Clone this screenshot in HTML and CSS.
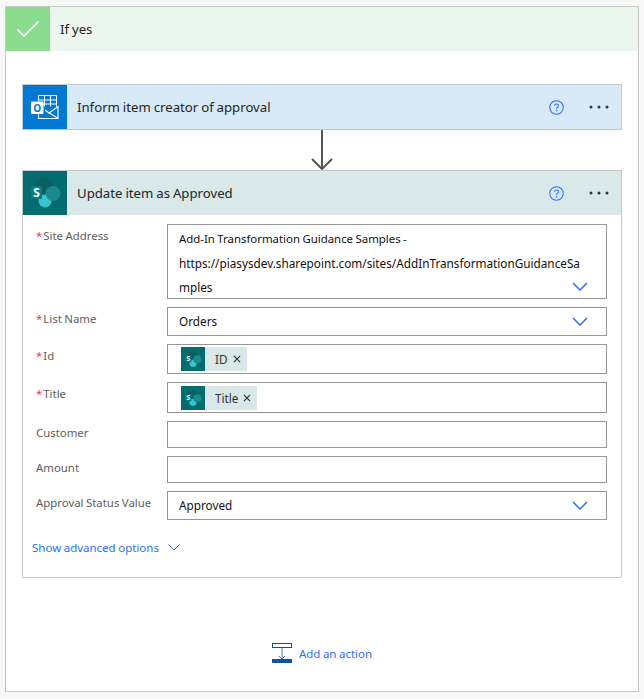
FILE: index.html
```html
<!DOCTYPE html>
<html lang="en">
<head>
  <meta charset="UTF-8" />
  <title>If yes</title>
  <link rel="stylesheet" href="styles.css">
</head>
<body>

  <svg class="defs" width="0" height="0">
    <symbol id="sharepoint" viewBox="0 0 44 44">
      <circle cx="21" cy="17" r="10" fill="#0b5f63" />
      <circle cx="22" cy="30" r="6.500" fill="#37c6d0" />
      <circle cx="30" cy="22.500" r="7.500" fill="#1a8a8f" />
      <rect x="8" y="15" width="11" height="13" rx="1" fill="#0a7c80" />
    </symbol>
    <symbol id="chevron" viewBox="0 0 16 9">
      <path d="M1 1l7 7 7-7" fill="none" stroke="#2b6fff" stroke-width="1.5" />
    </symbol>
    <symbol id="help" viewBox="0 0 16 16">
      <circle cx="8" cy="8" r="7.2" fill="none" stroke="#2b6fff" stroke-width="1.1" />
      <path d="M5.9 6.2c0-1.3 1-2 2.1-2s2.1.7 2.1 1.9c0 1.700-2.100 1.700-2.100 3.500" fill="none" stroke="#2b6fff" stroke-width="1.1" />
      <circle cx="8" cy="11.500" r=".8" fill="#2b6fff" />
    </symbol>
    <symbol id="dots" viewBox="0 0 20 4">
      <circle cx="2" cy="2" r="1.500" fill="#333" />
      <circle cx="10" cy="2" r="1.500" fill="#333" />
      <circle cx="18" cy="2" r="1.500" fill="#333" />
    </symbol>
    <symbol id="close" viewBox="0 0 9 9">
      <path d="M1 1l7 7M8 1l-7 7" fill="none" stroke="#333" stroke-width="1.300" />
    </symbol>
  </svg>

  <div class="branch">
    <div class="branch-head">
      <div class="branch-icon">
        <svg width="24" height="18" viewBox="0 0 24 18"><path d="M1.500 9.500l6.500 6.500 14.500-14.500" fill="none" stroke="#fff" stroke-width="1.600" /></svg>
      </div>
      <span class="branch-title">If yes</span>
    </div>

    <div class="branch-body">
      <div class="card">
        <div class="card-head outlook">
          <div class="card-icon outlook-icon">
            <svg width="28" height="26" viewBox="0 0 28 26">
              <path d="M7.500 1.500h18v11M7.500 1.500v5M13.500 1.500v11M19.500 1.500v11M7.500 6h18M7.500 10h18" fill="none" stroke="#fff" stroke-width="1" />
              <path d="M7.500 20v4.500h19.500v-12l-9 6.500-4-3" fill="none" stroke="#fff" stroke-width="1.100" />
              <path d="M26.500 24l-9-5.500" fill="none" stroke="#fff" stroke-width="1.100" />
              <rect x="0" y="7.500" width="12.500" height="12.500" rx="1" fill="#fff" />
              <text x="6.250" y="17.500" class="ol-letter">O</text>
            </svg>
          </div>
          <span class="card-title">Inform item creator of approval</span>
          <svg class="help-icon"><use href="#help" /></svg>
          <svg class="dots-icon"><use href="#dots" /></svg>
        </div>
      </div>

      <div class="arrow">
        <svg width="22" height="40" viewBox="0 0 22 40"><path d="M11 0v39M1 29l10 10 10-10" fill="none" stroke="#555" stroke-width="2" /></svg>
      </div>

      <div class="card">
        <div class="card-head sharepoint">
          <svg class="card-icon sp-icon" viewBox="0 0 44 44"><use href="#sharepoint" /><text x="13.500" y="26" class="sp-letter">S</text></svg>
          <span class="card-title">Update item as Approved</span>
          <svg class="help-icon"><use href="#help" /></svg>
          <svg class="dots-icon"><use href="#dots" /></svg>
        </div>

        <div class="form">
          <div class="row">
            <label class="field-label"><span class="req">*</span>Site Address</label>
            <div class="input input-site">
              <div class="site-text">
                <div class="site-name">Add-In Transformation Guidance Samples -</div>
                <div>https://piasysdev.sharepoint.com/sites/AddInTransformationGuidanceSa</div>
                <div>mples</div>
              </div>
              <svg class="chevron chevron-site"><use href="#chevron" /></svg>
            </div>
          </div>

          <div class="row">
            <label class="field-label"><span class="req">*</span>List Name</label>
            <div class="input input-select h29">
              <span>Orders</span>
              <svg class="chevron"><use href="#chevron" /></svg>
            </div>
          </div>

          <div class="row">
            <label class="field-label"><span class="req">*</span>Id</label>
            <div class="input input-tokens h30">
              <span class="token">
                <svg class="token-icon" viewBox="0 0 44 44"><use href="#sharepoint" /><text x="13.500" y="26" class="sp-letter">S</text></svg>
                <span class="token-text">ID</span>
                <svg class="token-x"><use href="#close" /></svg>
              </span>
            </div>
          </div>

          <div class="row">
            <label class="field-label"><span class="req">*</span>Title</label>
            <div class="input input-tokens h31">
              <span class="token">
                <svg class="token-icon" viewBox="0 0 44 44"><use href="#sharepoint" /><text x="13.500" y="26" class="sp-letter">S</text></svg>
                <span class="token-text">Title</span>
                <svg class="token-x"><use href="#close" /></svg>
              </span>
            </div>
          </div>

          <div class="row">
            <label class="field-label">Customer</label>
            <div class="input h27"></div>
          </div>

          <div class="row">
            <label class="field-label">Amount</label>
            <div class="input h27"></div>
          </div>

          <div class="row">
            <label class="field-label">Approval Status Value</label>
            <div class="input input-select h29">
              <span>Approved</span>
              <svg class="chevron"><use href="#chevron" /></svg>
            </div>
          </div>

          <div class="advanced">
            <span>Show advanced options</span>
            <svg width="12" height="7" viewBox="0 0 12 7"><path d="M.5.500l5.500 5.500 5.500-5.500" fill="none" stroke="#2b6fff" stroke-width="1" /></svg>
          </div>
        </div>
      </div>

      <div class="add-action">
        <svg width="20" height="20" viewBox="0 0 20 20">
          <rect x=".5" y=".5" width="19" height="4" fill="#fff" stroke="#0b53a5" />
          <path d="M10 5v11M7 13l3 3 3-3" fill="none" stroke="#4a7fb8" stroke-width="1" />
          <rect x="0" y="16" width="20" height="4" fill="#0b53a5" />
        </svg>
        <span>Add an action</span>
      </div>
    </div>
  </div>

</body>
</html>
```

FILE: styles.css
```css
* {
  box-sizing: border-box;
}
body {
  margin: 0;
  background: #f8f8f8;
  font-family: "Noto Sans", "Open Sans", sans-serif;
  font-size: 13.200px;
  word-spacing: -.5px;
  color: #252423;
}
.defs {
  display: block;
  height: 0;
}
.sp-letter {
  font-family: "Noto Sans", sans-serif;
  font-size: 12px;
  font-weight: 700;
  fill: #fff;
  text-anchor: middle;
}
.ol-letter {
  font-family: "Noto Sans", sans-serif;
  font-size: 10px;
  font-weight: 700;
  fill: #0078d4;
  text-anchor: middle;
}

/* outer branch */
.branch {
  width: 634px;
  height: 686px;
  margin: 6px 0 0 5px;
  background: #fff;
  border: 1px solid #c8c8c8;
}
.branch-head {
  display: flex;
  align-items: center;
  height: 44px;
  background: #ebf7ee;
}
.branch-icon {
  display: flex;
  align-items: center;
  justify-content: center;
  width: 44px;
  height: 44px;
  background: #8bdc8f;
}
.branch-title {
  margin-left: 10px;
}
.branch-body {
  padding: 33px 16px 0 16px;
}

/* action cards */
.card {
  border: 1px solid #c8c8c8;
}
.card-head {
  display: flex;
  align-items: center;
  height: 44px;
  padding-right: 12px;
}
.outlook {
  background: #d8e9f8;
}
.sharepoint {
  background: #d9e8e8;
}
.card-icon {
  display: flex;
  align-items: center;
  justify-content: center;
  flex: none;
  width: 44px;
  height: 44px;
}
.outlook-icon {
  background: #0078d4;
}
.sp-icon {
  background: #036c70;
}
.card-title {
  flex: 1;
  margin-left: 10px;
}
.help-icon {
  width: 15px;
  height: 15px;
}
.dots-icon {
  width: 20px;
  height: 4px;
  margin-left: 25px;
}
.arrow {
  display: flex;
  justify-content: center;
  height: 40px;
}
.arrow svg {
  display: block;
}

/* form */
.form {
  padding: 9px 14px 0 13px;
  height: 362px;
}
.row {
  display: flex;
  margin-bottom: 8px;
}
.field-label {
  width: 131px;
  flex: none;
  padding-top: 4px;
  font-size: 11.400px;
  color: #605e5c;
}
.req {
  color: #e6405f;
  margin-right: 1px;
}
.input {
  width: 440px;
  border: 1px solid #969696;
  background: #fff;
  color: #111;
  font-size: 11.750px;
}
.h27 {
  height: 27px;
}
.h29 {
  height: 29px;
}
.h30 {
  height: 30px;
}
.h31 {
  height: 31px;
}
.input-site {
  position: relative;
  height: 75px;
  padding: 2px 11px;
  line-height: 24px;
}
.site-text div {
  white-space: nowrap;
}
.site-name {
  font-size: 11.400px;
}
.input-select {
  display: flex;
  align-items: center;
  justify-content: space-between;
  padding: 0 18px 1px 11px;
}
.chevron {
  width: 16px;
  height: 9px;
}
.chevron-site {
  position: absolute;
  right: 18px;
  top: 57px;
}
.input-tokens {
  display: flex;
  align-items: center;
  padding-left: 13px;
}
.token {
  display: flex;
  align-items: center;
  height: 24px;
  background: #d9e8e8;
  padding-right: 6px;
}
.token-icon {
  width: 24px;
  height: 24px;
  background: #036c70;
}
.token-text {
  margin-left: 10px;
  color: #333;
}
.token-x {
  width: 8px;
  height: 8px;
  margin-left: 5px;
}
.advanced {
  display: flex;
  align-items: center;
  gap: 9px;
  margin: 20px 0 0 -4px;
  font-size: 11.500px;
  color: #2b6fff;
}

/* add action */
.add-action {
  display: flex;
  align-items: center;
  justify-content: center;
  gap: 7px;
  margin-top: 65px;
  color: #2b6fff;
  font-size: 11.500px;
}
```
